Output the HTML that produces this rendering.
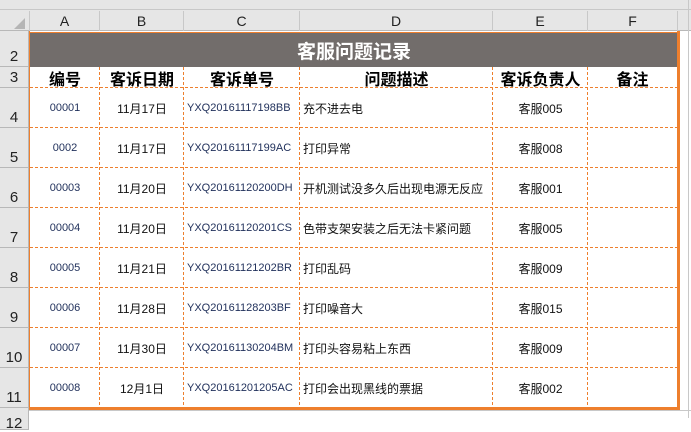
<!DOCTYPE html>
<html><head><meta charset="utf-8"><style>
*{margin:0;padding:0;box-sizing:border-box}
body{width:691px;height:418px;overflow:hidden;background:#fff;position:relative;font-family:"Liberation Sans","Noto Sans CJK SC",sans-serif}
.a{position:absolute}
.ch{position:absolute;top:11px;height:20px;border-right:1px solid #c8c8c8;font-size:14px;color:#222;text-align:center;line-height:20px}
.rh{position:absolute;left:0;width:29px;background:#e6e6e6;border-bottom:1px solid #b8b8b8;border-right:1px solid #b8b8b8;font-size:15px;color:#222;text-align:center;display:flex;align-items:flex-end;justify-content:center;padding-bottom:1px}
.c{position:absolute;display:flex;align-items:center;justify-content:center;font-size:12px;color:#111}
.h{font-size:16px;font-weight:bold;color:#000}
.l{justify-content:flex-start;padding-left:3px}
.n{color:#1f2f5a;font-size:11px}
</style></head><body>
<div class="a" style="left:0;top:0;width:691px;height:31px;background:#e6e6e6;border-bottom:1px solid #b8b8b8"></div>
<div class="a" style="left:0;top:0;width:691px;height:10px;background:#e6e6e6;border-bottom:1px solid #c8c8c8"></div>
<div class="a" style="left:14px;top:18px;width:0;height:0;border-left:11px solid transparent;border-bottom:11px solid #b5b5b5"></div>
<div class="ch" style="left:29px;width:71px;border-left:1px solid #c8c8c8">A</div>
<div class="ch" style="left:100px;width:84px">B</div>
<div class="ch" style="left:184px;width:116px">C</div>
<div class="ch" style="left:300px;width:193px">D</div>
<div class="ch" style="left:493px;width:95px">E</div>
<div class="ch" style="left:588px;width:90px">F</div>
<div class="a" style="left:688px;top:0;width:1px;height:418px;background:#c8c8c8"></div>
<div class="rh" style="top:31px;height:36px">2</div>
<div class="rh" style="top:67px;height:21px">3</div>
<div class="rh" style="top:88px;height:40px">4</div>
<div class="rh" style="top:128px;height:40px">5</div>
<div class="rh" style="top:168px;height:40px">6</div>
<div class="rh" style="top:208px;height:40px">7</div>
<div class="rh" style="top:248px;height:40px">8</div>
<div class="rh" style="top:288px;height:40px">9</div>
<div class="rh" style="top:328px;height:40px">10</div>
<div class="rh" style="top:368px;height:40px">11</div>
<div class="rh" style="top:408px;height:22px;align-items:flex-start;padding-top:7px">12</div>
<div class="a" style="left:29px;top:410px;width:662px;height:1px;background:#c8c8c8"></div>
<div class="a" style="left:30px;top:32px;width:648px;height:35px;background:#726d6b;color:#fff;font-size:19px;font-weight:bold;display:flex;align-items:center;justify-content:center;border-top:1px solid #ee7f2d">客服问题记录</div>
<div id="g"></div>
<svg class="a" style="left:0;top:0" width="691" height="418" shape-rendering="crispEdges">
<g stroke="#ee7f2d" stroke-width="1" stroke-dasharray="3 2">
<path d="M30 87.5H677M30 127.5H677M30 167.5H677M30 207.5H677M30 247.5H677M30 287.5H677M30 327.5H677M30 367.5H677"/>
<path d="M99.5 67V407M183.5 67V407M299.5 67V407M492.5 67V407M587.5 67V407"/>
</g>
<rect x="29" y="31" width="1" height="379" fill="#ee7f2d"/>
<rect x="677" y="31" width="3" height="379" fill="#ee7f2d"/>
<rect x="29" y="407" width="651" height="3" fill="#ee7f2d"/>
</svg>
<script>
var xs=[30,100,184,300,493,588,677];
var rows=[["编号","客诉日期","客诉单号","问题描述","客诉负责人","备注"],
["00001","11月17日","YXQ20161117198BB","充不进去电","客服005",""],
["0002","11月17日","YXQ20161117199AC","打印异常","客服008",""],
["00003","11月20日","YXQ20161120200DH","开机测试没多久后出现电源无反应","客服001",""],
["00004","11月20日","YXQ20161120201CS","色带支架安装之后无法卡紧问题","客服005",""],
["00005","11月21日","YXQ20161121202BR","打印乱码","客服009",""],
["00006","11月28日","YXQ20161128203BF","打印噪音大","客服015",""],
["00007","11月30日","YXQ20161130204BM","打印头容易粘上东西","客服009",""],
["00008","12月1日","YXQ20161201205AC","打印会出现黑线的票据","客服002",""]];
var h="",y=67;
rows.forEach(function(r,i){var hh=i==0?21:40;
r.forEach(function(t,j){var cls="c"+(i==0?" h":"")+(i>0&&(j==2||j==3)?" l":"")+(i>0&&(j==0||j==2)?" n":"");
h+='<div class="'+cls+'" style="left:'+xs[j]+'px;top:'+y+'px;width:'+(xs[j+1]-xs[j])+'px;height:'+hh+'px">'+t+'</div>';});
y+=hh;});
document.getElementById("g").innerHTML=h;
</script>
</body></html>
